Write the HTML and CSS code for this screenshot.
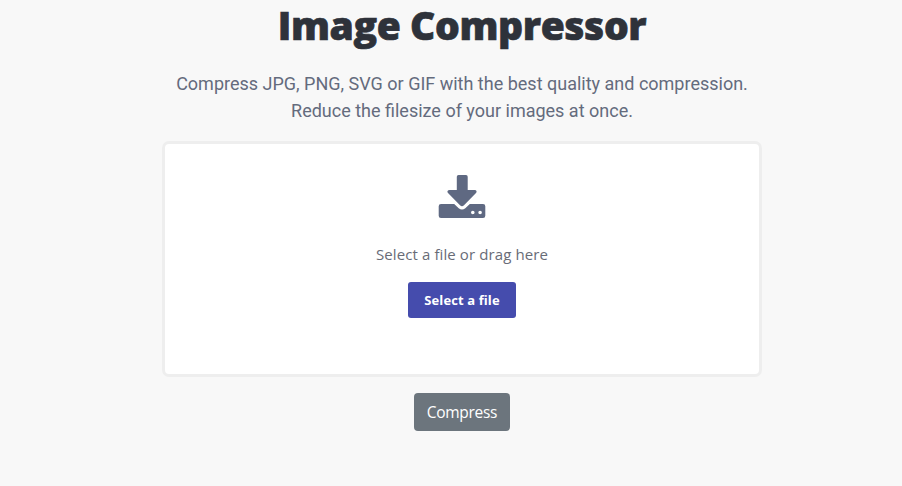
FILE: index.html
```html
<!DOCTYPE html>
<html lang="en">
<head>
<meta charset="utf-8">
<title>Image Compressor</title>
<link rel="stylesheet" href="styles.css">
</head>
<body>
<main class="page">
  <h1 class="title">Image Compressor</h1>
  <p class="lead"><span>Compress JPG, PNG, SVG or GIF with the best quality and compression.</span><span>Reduce the filesize of your images at once.</span></p>
  <label class="dropzone">
    <svg class="icon" viewBox="0 0 48 43"><path d="M20.500 0h7.500q1.700 0 1.700 1.700V15h6.700c2 0 2.900 1.700 1.600 3L26 30.300q-2 1.700-4 0L10 18c-1.300-1.300-.4-3 1.600-3h7.200V1.700Q18.800 0 20.500 0z"/><path fill-rule="evenodd" d="M3 29h13.200l4.500 4.200q3.300 2.500 6.600 0l4.500-4.200H45q2.300 0 2.300 2.300v9.400Q47.300 43 45 43H3Q.7 43 .7 40.700v-9.400Q.7 29 3 29zm30 8.500a1.800 1.800 0 1 0 3.600 0a1.800 1.800 0 1 0-3.600 0zm7.300 0a1.800 1.800 0 1 0 3.600 0a1.800 1.800 0 1 0-3.600 0z"/></svg>
    <span class="hint">Select a file or drag here</span>
    <span class="select">Select a file</span>
  </label>
  <button class="compress" type="button">Compress</button>
</main>
</body>
</html>
```
FILE: styles.css
```css
* { box-sizing: border-box; }
body { margin: 0; background: #f8f8f8; font-family: "Open Sans", "Noto Sans", sans-serif; }
.page { width: 600px; height: 486px; margin-left: 162px; display: flex; flex-direction: column; align-items: center; }
.title { margin: 0; font-size: 39px; line-height: 49px; letter-spacing: -0.4px; font-weight: 800; color: #2e323a; -webkit-text-stroke: 0.7px #2e323a; white-space: nowrap; }
.lead { margin: 21px 0 17px; font: 18px/27px Roboto, sans-serif; color: #646b7d; display: flex; flex-direction: column; align-items: center; white-space: nowrap; }
.dropzone { width: 600px; height: 236px; border: 3px solid #eee; border-radius: 7px; background: #fff; display: flex; flex-direction: column; align-items: center; }
.icon { width: 48px; height: 43px; margin-top: 31px; fill: #5f6982; }
.hint { margin-top: 24px; font-size: 15px; line-height: 24px; letter-spacing: 0.1px; color: #686c77; }
.select { margin-top: 16px; width: 108px; height: 36px; border-radius: 3px; background: #454cad; color: #fff; font-size: 13px; line-height: 36px; font-weight: 700; letter-spacing: 0.1px; text-align: center; }
.compress { margin-top: 16px; width: 96px; height: 38px; border: 0; border-radius: 4px; background: #6c757d; color: #fff; font: 15.500px/38px "Open Sans", sans-serif; letter-spacing: -0.3px; padding: 0; }
```
